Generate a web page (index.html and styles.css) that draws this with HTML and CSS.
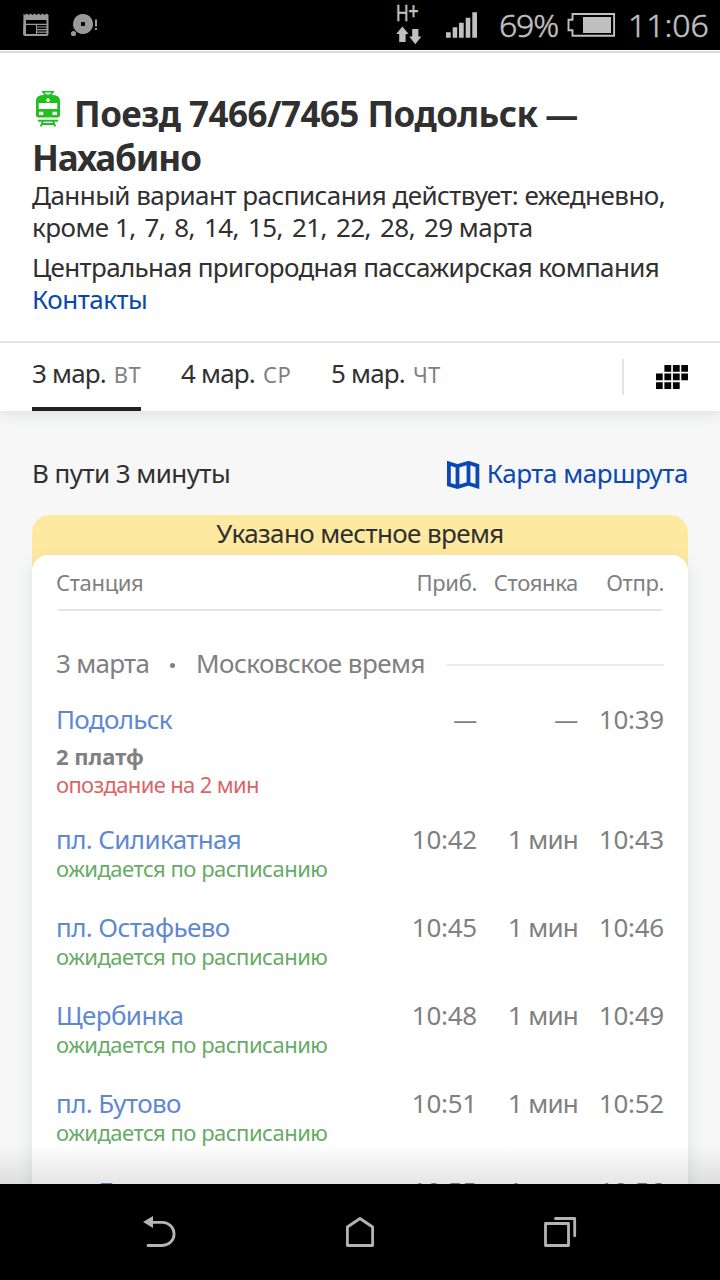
FILE: index.html
```html
<!DOCTYPE html>
<html lang="ru">
<head>
<meta charset="utf-8">
<title>Поезд 7466/7465 Подольск — Нахабино</title>
<link rel="stylesheet" href="styles.css">
</head>
<body>
<div class="screen">
  <header class="status">
    <svg class="status-left" width="80" height="50" viewBox="20 0 80 50" fill="#9a9a9a">
      <path d="M23.500 13.500l1.500 1.500 1.600-1.500 2 1.500 2-1.500 2 1.500 2-1.500 2 1.500 2-1.500 2 1.500 2-1.500 2 1.500 2-1.500 1.900 1.500V34a2 2 0 0 1-2 2h-21.500a2 2 0 0 1-2-2zM26 20v3.700h20.500V20zM26 25v9h10v-9zM37 25v1.500h9.500V25zm0 2.600v1.400h9.500v-1.400zm0 2.600v1.400h9.500v-1.400zm0 2.600v1.200h9.500v-1.200z" fill-rule="evenodd"/>
      <path d="M83 14a10 10 0 1 0 .01 0zm-2 8h4v4h-4z" fill-rule="evenodd"/>
      <circle cx="73.500" cy="33.500" r="2.600"/>
      <path d="M95 19.500h2v7h-2zM95 28h2v2h-2z"/>
    </svg>
    <div class="network">
      <div class="network-type"><span>H</span><span class="plus">+</span></div>
      <svg class="arrows" width="26" height="19" viewBox="396 26 26 19" fill="#c0c0c0"><path d="M402.400 26.500l6.200 7.500h-3v8h-6.400v-8h-3zM412.200 29h6.200v7.500h3l-6.100 7.800-6.100-7.800h3z"/></svg>
    </div>
    <svg class="signal" width="32" height="50" viewBox="446 0 32 50" fill="#c0c0c0"><path d="M446 32.300h4.700v5.400H446zM452.700 27.300h4.500v10.400h-4.500zM459 22.700h4.700v15H459zM465.700 17.700h4.600v20h-4.600zM472.300 12.300h4.700v25.400h-4.700z"/></svg>
    <span class="percent">69%</span>
    <svg class="battery" width="49" height="50" viewBox="567 0 49 50"><path d="M572.500 14h41.600v21.800h-41.600v-5.600h-4V19.700h4z" fill="none" stroke="#c0c0c0" stroke-width="1.900"/><path d="M583 17h28v16h-28z" fill="#c0c0c0"/></svg>
    <span class="clock">11:06</span>
  </header>

  <main class="page">
    <section class="intro">
      <h1 class="title"><svg class="train" width="32" height="36" viewBox="0 0 32 36"><path d="M10 .8h12M11 1l3 3.200M21 1l-3 3.200" fill="none" stroke="#1fc01f" stroke-width="1.500"/><path d="M4 9.500C4 5 9 3.500 16 3.500S28 5 28 9.500V24a2.500 2.500 0 0 1-2.500 2.500h-19A2.500 2.500 0 0 1 4 24zM6.700 12v6h18.600v-6zM16 7.300a1.800 1.800 0 1 0 .01 0zM7 20.700V24h4.300v-3.300zM20.500 20.700V24H25v-3.300z" fill="#1fc01f" fill-rule="evenodd"/><path d="M6 28.700h20v2H6z" fill="#1fc01f"/><path d="M11 30l-2.200 5.500M21 30l2.200 5.500M9.500 33h13" fill="none" stroke="#1fc01f" stroke-width="2"/></svg>Поезд 7466/7465 Подольск <span class="title-dash">—</span> <br><span class="title-end">Нахабино</span></h1>
      <p class="text schedule">Данный вариант расписания действует: ежедневно,<br>кроме <span class="dates">1, 7, 8, 14, 15, 21, 22, 28, 29</span> марта</p>
      <p class="text company">Центральная пригородная пассажирская компания</p>
      <a class="text contacts">Контакты</a>
    </section>

    <nav class="days">
      <a class="day active"><span class="date">3 мар.</span><span class="weekday">ВТ</span></a>
      <a class="day"><span class="date">4 мар.</span><span class="weekday">СР</span></a>
      <a class="day"><span class="date">5 мар.</span><span class="weekday">ЧТ</span></a>
      <div class="calendar"><svg width="32" height="24" viewBox="0 0 32 24"><path d="M8.400 0h6.800v6.700H8.400zM16.900 0h6.800v6.700h-6.800zM25.300 0H32v6.700h-6.700zM0 8.600h6.700v6.700H0zM8.400 8.600h6.800v6.700H8.400zM16.900 8.600h6.800v6.700h-6.800zM25.300 8.600H32v6.700h-6.700zM0 17.200h6.700v6.700H0zM8.400 17.200h6.800v6.700H8.400zM16.900 17.200h6.800v6.700h-6.800z"/></svg></div>
    </nav>

    <div class="summary">
      <span class="duration">В пути 3 минуты</span>
      <a class="map-link"><svg class="map-icon" width="33" height="28" viewBox="0 0 33 28"><path d="M1.900 2.400L10.500 5l11-3.200 8.900 2.800v20.900l-8.900-2.700-11 3.200-8.600-2.500zM10.500 5v21M21.500 2v21" fill="none" stroke="#0a48b4" stroke-width="3.800"/></svg>Карта маршрута</a>
    </div>

    <section class="notice"><div class="notice-text">Указано местное время</div>
      <div class="card">
        <div class="grid head"><span class="station-head">Станция</span><span>Приб.</span><span>Стоянка</span><span>Отпр.</span></div>
        <div class="zone"><span class="zone-date">3 марта</span><i class="dot"></i><span class="zone-name">Московское время</span><i class="rule"></i></div>
        <div class="stop">
          <div class="grid"><a class="station podolsk">Подольск</a><span class="dash">—</span><span class="dash">—</span><span>10:39</span></div>
          <div class="platform">2 платф</div>
          <div class="state late">опоздание на 2 мин</div>
        </div>
        <div class="stop">
          <div class="grid"><a class="station">пл. Силикатная</a><span>10:42</span><span class="wait">1 мин</span><span>10:43</span></div>
          <div class="state">ожидается по расписанию</div>
        </div>
        <div class="stop">
          <div class="grid"><a class="station">пл. Остафьево</a><span>10:45</span><span class="wait">1 мин</span><span>10:46</span></div>
          <div class="state">ожидается по расписанию</div>
        </div>
        <div class="stop">
          <div class="grid"><a class="station">Щербинка</a><span>10:48</span><span class="wait">1 мин</span><span>10:49</span></div>
          <div class="state">ожидается по расписанию</div>
        </div>
        <div class="stop">
          <div class="grid"><a class="station">пл. Бутово</a><span>10:51</span><span class="wait">1 мин</span><span>10:52</span></div>
          <div class="state">ожидается по расписанию</div>
        </div>
        <div class="stop">
          <div class="grid"><a class="station">пл. Битца</a><span>10:55</span><span class="wait">1 мин</span><span>10:56</span></div>
        </div>
      </div>
    </section>
    <div class="fade"></div>
  </main>

  <footer class="navbar">
    <svg width="34" height="34" viewBox="143 1215 34 34"><path d="M143 1222l10-6v12z" fill="#b4b4b4"/><path d="M152 1222.300h10.500a11.600 11.600 0 0 1 0 23.200H148" fill="none" stroke="#b4b4b4" stroke-width="2.800" stroke-linecap="round"/></svg>
    <svg width="30" height="34" viewBox="345 1215 30 34"><path d="M360 1218.500l12.600 8.500v18.500h-25.200V1227z" fill="none" stroke="#b4b4b4" stroke-width="2.800" stroke-linejoin="round"/></svg>
    <svg width="34" height="34" viewBox="543 1215 34 34"><path d="M545.500 1223.500h23v22h-23zM555.500 1218.500h19.200v17.300" fill="none" stroke="#b4b4b4" stroke-width="2.800" stroke-linecap="round" stroke-linejoin="round"/></svg>
  </footer>
</div>
</body>
</html>
```
FILE: styles.css
```css
* { box-sizing: border-box; }
body {
  margin: 0;
  font: 26px/32px "Noto Sans", sans-serif;
  letter-spacing: -0.5px;
  color: #303030;
  background: #000;
}
svg { display: block; flex: none; }
.screen { width: 720px; height: 1280px; display: flex; flex-direction: column; overflow: hidden; }

/* status bar */
.status { height: 50px; flex: none; display: flex; align-items: center; background: #000; color: #c0c0c0; padding-left: 20px; }
.network { width: 26px; height: 50px; margin-left: 296px; padding-top: 2px; }
.network-type { font: 22px/24px Roboto, sans-serif; letter-spacing: 0; transform: scaleX(0.8); transform-origin: 0 0; white-space: nowrap; -webkit-text-stroke: 0.3px #c0c0c0; }
.plus { position: relative; top: -2px; }
.signal { margin-left: 24px; }
.percent, .clock { font-size: 32px; line-height: 50px; font-weight: 300; -webkit-text-stroke: 0.5px #c0c0c0; white-space: nowrap; }
.percent { width: 68px; margin-left: 21px; letter-spacing: -1.2px; }
.clock { margin-left: 12px; letter-spacing: 0; }

/* page */
.page { flex: 1; min-height: 0; position: relative; overflow: hidden; background: #f7f7f7; display: flex; flex-direction: column; }
.intro { flex: none; height: 293px; background: #fff; border-top: 1px solid #fff; border-bottom: 2px solid #e4e4e4; padding: 40px 32px 0; box-shadow: inset 0 2px #d9d9d9; }
.title { margin: 0; font-size: 35px; line-height: 44px; font-weight: 700; letter-spacing: -0.54px; white-space: nowrap; color: #303030; }
.title-dash { font-size: 33px; line-height: 0; letter-spacing: -2px; margin-left: -1px; }
.title-end { letter-spacing: -1.1px; }
.train { display: inline-block; vertical-align: baseline; margin-right: 10px; }
.text { display: block; margin: 0; white-space: nowrap; }
.schedule { margin-top: -1px; letter-spacing: -0.54px; }
.dates { word-spacing: 2.7px; }
.company { margin-top: 8px; letter-spacing: -0.65px; }
.contacts { color: #0a48ac; }

.days { flex: none; height: 68px; display: flex; gap: 40px; padding-left: 32px; background: #fff; box-shadow: 0 2px 16px rgba(40, 80, 70, 0.14); position: relative; clip-path: inset(0 0 -24px 0); }
.day { display: flex; width: 110px; height: 68px; padding-top: 14px; white-space: nowrap; }
.active { width: 109px; border-bottom: 4px solid #222; }
.date { width: 82px; letter-spacing: -0.8px; }
.weekday { font-size: 22px; line-height: 34px; color: #808080; letter-spacing: 0.3px; }
.calendar { margin: 16px 32px 0 auto; height: 36px; border-left: 2px solid #e4e4e4; padding: 6px 0 0 32px; }

.summary { flex: none; display: flex; justify-content: space-between; padding: 46px 32px 0; letter-spacing: -0.45px; }
.duration { letter-spacing: -0.55px; }
.map-link { display: flex; color: #0a48b4; white-space: nowrap; }
.map-icon { margin: 4px 7px 0 0; }

/* timetable */
.notice { flex: none; margin: 26px 32px 0; background: #fee9a0; border-radius: 18px 18px 0 0; }
.notice-text { height: 40px; padding-top: 2px; text-align: center; letter-spacing: -0.62px; }
.card { background: #fff; border-radius: 16px 16px 0 0; padding: 13px 24px 0; color: #808080; height: 800px; box-shadow: 0 4px 16px rgba(40, 80, 70, 0.12); }
.grid { display: grid; grid-template-columns: 1fr 90px 101px 86px; text-align: right; letter-spacing: -0.25px; white-space: nowrap; }
.head { position: relative; font-size: 22px; line-height: 28px; height: 43px; letter-spacing: -0.35px; }
.head::after { content: ""; position: absolute; left: 2px; right: 2px; bottom: 0; height: 2px; background: #e4e4e4; }
.station-head { text-align: left; }
.zone { display: flex; align-items: center; margin-top: 36px; margin-bottom: 24px; white-space: nowrap; }
.zone-date { width: 114px; letter-spacing: -0.7px; }
.dot { width: 5px; height: 5px; border-radius: 50%; background: #808080; margin-top: 4px; }
.zone-name { width: 250px; margin-left: 21px; letter-spacing: -0.55px; }
.rule { flex: 1; height: 2px; background: #ececec; margin-top: 3px; }
.stop { margin-bottom: 29px; }
.stop:nth-child(3) { margin-bottom: 25px; }
.station { color: #5f88d3; text-align: left; letter-spacing: -0.62px; }
.podolsk { letter-spacing: -0.7px; }
.wait { letter-spacing: -0.75px; }
.dash { font-size: 24px; }
.platform { margin-top: 7px; font-size: 22px; line-height: 28px; font-weight: 700; letter-spacing: 0; }
.state { margin-top: -1px; font-size: 22px; line-height: 28px; color: #66ab66; letter-spacing: -0.5px; }
.late { margin-top: 0; color: #dc6464; letter-spacing: -0.66px; }
.fade { position: absolute; left: 0; right: 0; bottom: 0; height: 40px; background: linear-gradient(rgba(0, 0, 0, 0), rgba(0, 0, 0, 0.1)); }

/* system buttons */
.navbar { height: 96px; flex: none; background: #000; display: flex; justify-content: space-between; align-items: center; padding: 0 143px; }
```
